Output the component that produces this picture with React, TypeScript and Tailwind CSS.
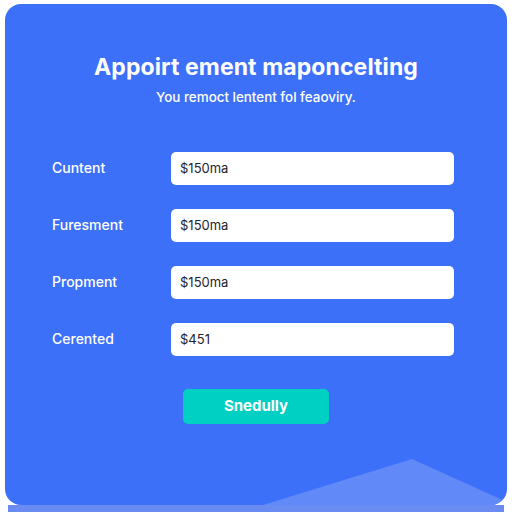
import React from "react";

const rows = [
  { label: "Cuntent", value: "$150ma" },
  { label: "Furesment", value: "$150ma" },
  { label: "Propment", value: "$150ma" },
  { label: "Cerented", value: "$451" },
];

export default function App() {
  return (
    <div className="w-[512px] h-[512px] bg-white overflow-hidden" style={{ fontFamily: "Inter, 'Open Sans', sans-serif" }}>
      <div className="relative ml-[5px] mt-[4px] w-[502px] h-[501px] rounded-2xl bg-[#3d70f9] overflow-hidden flex flex-col items-center">
        {/* soft mountain shape in the lower right */}
        <svg className="absolute left-0 top-0" width="502" height="501" viewBox="0 0 502 501">
          <polygon points="258,501 407,455 502,498 502,501" fill="#6189f8" />
        </svg>
        <h1 className="relative mt-[49px] text-[23px] leading-[28px] font-bold text-white tracking-[0.1px]">
          Appoirt ement maponcelting
        </h1>
        <p className="relative mt-[7px] text-[13.4px] leading-[18px] font-medium text-white">
          You remoct lentent fol feaoviry.
        </p>
        <div className="relative mt-[46px] flex flex-col gap-[24px] self-stretch pl-[47px]">
          {rows.map((r) => (
            <div key={r.label} className="flex items-center">
              <div className="w-[119px] -mt-[3px] text-[14px] font-medium text-white">{r.label}</div>
              <div className="w-[283px] h-[33px] rounded-[5px] bg-white flex items-center pl-[9px] text-[13px] text-[#1f2230]">
                {r.value}
              </div>
            </div>
          ))}
        </div>
        <button className="relative mt-[33px] w-[146px] h-[35px] rounded-[5px] bg-[#00cfc4] text-white text-[15px] font-bold">
          Snedully
        </button>
      </div>
      <div className="ml-[8px] w-[496px] h-[7px] bg-[#6a8cf2]" />
    </div>
  );
}
